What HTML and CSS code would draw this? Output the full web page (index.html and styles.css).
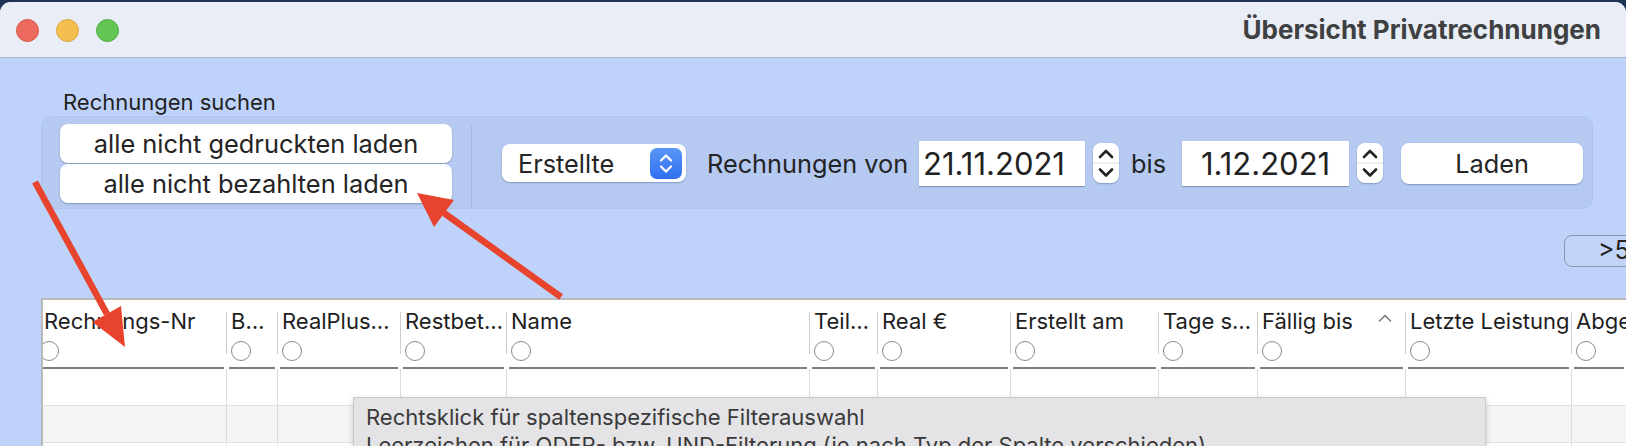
FILE: index.html
```html
<!DOCTYPE html>
<html lang="de">
<head>
<meta charset="utf-8">
<title>Übersicht Privatrechnungen</title>
<link rel="stylesheet" href="styles.css">
</head>
<body>
<div class="window">
  <div class="titlebar">
    <div class="lights">
      <span class="light red"></span>
      <span class="light yellow"></span>
      <span class="light green"></span>
    </div>
    <div class="title">Übersicht Privatrechnungen</div>
  </div>

  <div class="content">
    <div class="search-label">Rechnungen suchen</div>
    <div class="group">
      <div class="quick">
        <div class="qbtn">alle nicht gedruckten laden</div>
        <div class="qbtn">alle nicht bezahlten laden</div>
      </div>
      <div class="vsep"></div>
      <div class="controls">
        <div class="popup">
          <span class="popup-text">Erstellte</span>
          <svg class="popup-arrows" width="32" height="31" viewBox="0 0 32 31">
            <defs>
              <linearGradient id="pb" x1="0" y1="0" x2="0" y2="1">
                <stop offset="0" stop-color="#5a97f8"/>
                <stop offset="1" stop-color="#2f6fef"/>
              </linearGradient>
            </defs>
            <rect x="0" y="0" width="32" height="31" rx="7" fill="url(#pb)"/>
            <path d="M11 12.5 L16 7.5 L21 12.5" fill="none" stroke="#fff" stroke-width="2.2" stroke-linecap="round" stroke-linejoin="round"/>
            <path d="M11 18.5 L16 23.5 L21 18.5" fill="none" stroke="#fff" stroke-width="2.2" stroke-linecap="round" stroke-linejoin="round"/>
          </svg>
        </div>
        <span class="ctl-label von">Rechnungen von</span>
        <div class="datefield d1">21.11.2021</div>
        <svg class="stepper" width="26" height="40" viewBox="0 0 26 40">
          <path d="M7 14 L13 8 L19 14" fill="none" stroke="#222" stroke-width="2.6" stroke-linecap="round" stroke-linejoin="round"/>
          <path d="M7 26.5 L13 32.5 L19 26.5" fill="none" stroke="#222" stroke-width="2.6" stroke-linecap="round" stroke-linejoin="round"/>
        </svg>
        <span class="ctl-label bis">bis</span>
        <div class="datefield d2">1.12.2021</div>
        <svg class="stepper s2" width="26" height="40" viewBox="0 0 26 40">
          <path d="M7 14 L13 8 L19 14" fill="none" stroke="#222" stroke-width="2.6" stroke-linecap="round" stroke-linejoin="round"/>
          <path d="M7 26.5 L13 32.5 L19 26.5" fill="none" stroke="#222" stroke-width="2.6" stroke-linecap="round" stroke-linejoin="round"/>
        </svg>
        <div class="laden">Laden</div>
      </div>
    </div>

    <div class="pager">
      <div class="pbtn">&gt;5</div>
    </div>

    <div class="table">
      <div class="thead">
        <div class="hc first"><div class="ht">Rechnungs-Nr</div><span class="radio"></span><div class="hline"></div></div>
        <div class="hc"><div class="ht">B…</div><span class="radio"></span><div class="hline"></div></div>
        <div class="hc"><div class="ht">RealPlus…</div><span class="radio"></span><div class="hline"></div></div>
        <div class="hc"><div class="ht">Restbet…</div><span class="radio"></span><div class="hline"></div></div>
        <div class="hc"><div class="ht">Name</div><span class="radio"></span><div class="hline"></div></div>
        <div class="hc"><div class="ht">Teil…</div><span class="radio"></span><div class="hline"></div></div>
        <div class="hc"><div class="ht">Real €</div><span class="radio"></span><div class="hline"></div></div>
        <div class="hc"><div class="ht">Erstellt am</div><span class="radio"></span><div class="hline"></div></div>
        <div class="hc"><div class="ht">Tage s…</div><span class="radio"></span><div class="hline"></div></div>
        <div class="hc"><div class="ht sorted"><span>Fällig bis</span><svg class="sort" width="14" height="8" viewBox="0 0 14 8"><path d="M1.5 7 L7 1.5 L12.5 7" fill="none" stroke="#7a7a7a" stroke-width="1.6" stroke-linecap="round" stroke-linejoin="round"/></svg></div><span class="radio"></span><div class="hline"></div></div>
        <div class="hc"><div class="ht">Letzte Leistung</div><span class="radio"></span><div class="hline"></div></div>
        <div class="hc last"><div class="ht">Abgeschlossen</div><span class="radio"></span><div class="hline"></div></div>
      </div>
      <div class="trow">
        <div></div><div></div><div></div><div></div><div></div><div></div><div></div><div></div><div></div><div></div><div></div><div></div>
      </div>
      <div class="trow alt">
        <div></div><div></div><div></div><div></div><div></div><div></div><div></div><div></div><div></div><div></div><div></div><div></div>
      </div>
      <div class="trow">
        <div></div><div></div><div></div><div></div><div></div><div></div><div></div><div></div><div></div><div></div><div></div><div></div>
      </div>
    </div>
  </div>

  <div class="tooltip">
    <div>Rechtsklick für spaltenspezifische Filterauswahl</div>
    <div>Leerzeichen für ODER- bzw. UND-Filterung (je nach Typ der Spalte verschieden)</div>
  </div>

  <svg class="arrows" width="1626" height="446" viewBox="0 0 1626 446">
    <g fill="#e8432c" stroke="none">
      <path d="M35 182 L107 314" stroke="#e8432c" stroke-width="6.5" fill="none"/>
      <polygon points="125,347 92.5,322 121,306"/>
      <path d="M561 297 L444 213" stroke="#e8432c" stroke-width="6.5" fill="none"/>
      <polygon points="417,193 434,227 454,200"/>
    </g>
  </svg>
</div>
</body>
</html>
```
FILE: styles.css
```css
html, body {
  margin: 0;
  padding: 0;
}
body {
  width: 1626px;
  height: 446px;
  overflow: hidden;
  background: #1f3357;
  font-family: Inter, "Noto Sans", "Liberation Sans", sans-serif;
  color: #252525;
}

.window {
  position: relative;
  margin-top: 2px;
  width: 1626px;
  height: 444px;
  overflow: hidden;
  border-radius: 11px 11px 0 0;
  background: #bfd3fa;
}

/* Title bar */
.titlebar {
  height: 55px;
  border-bottom: 1px solid #a9b8d7;
  background: #e9edf5;
  display: flex;
  align-items: center;
  box-sizing: content-box;
}
.lights {
  display: flex;
  gap: 17px;
  padding-left: 16px;
  margin-top: 1px;
}
.light {
  width: 23px;
  height: 23px;
  border-radius: 50%;
  box-sizing: border-box;
}
.red { background: #ed6a5e; border: 1px solid #d8574b; }
.yellow { background: #f5bf4f; border: 1px solid #dba540; }
.green { background: #62c554; border: 1px solid #50ac43; }
.title {
  margin-left: auto;
  padding-right: 25px;
  font-size: 26px;
  font-weight: 700;
  color: #3f4042;
  letter-spacing: 0;
}

/* Content */
.content {
  padding-top: 31px;
}
.search-label {
  margin-left: 63px;
  height: 27px;
  line-height: 27px;
  font-size: 22px;
  color: #222;
}
.group {
  margin-left: 41px;
  width: 1552px;
  height: 93px;
  box-sizing: border-box;
  border: 1px solid #afc3eb;
  border-radius: 10px;
  background: #b5c9f1;
  display: flex;
}
.quick {
  display: flex;
  flex-direction: column;
  gap: 1px;
  padding: 7px 0 0 18px;
}
.qbtn {
  width: 392px;
  height: 39px;
  line-height: 39px;
  background: #fff;
  border-radius: 8px;
  box-shadow: 0 1px 1.5px rgba(40, 60, 100, 0.35);
  font-size: 25.4px;
  text-align: center;
  color: #242424;
}
.vsep {
  width: 1px;
  background: #a2b6dd;
  margin: 9px 0 0 19px;
}
.controls {
  display: flex;
  align-items: center;
  margin-left: 30px;
  padding-top: 1px;
}
.popup {
  width: 184px;
  height: 38px;
  box-sizing: border-box;
  background: #fff;
  border-radius: 8px;
  box-shadow: 0 1px 1.5px rgba(40, 60, 100, 0.35);
  display: flex;
  align-items: center;
  padding-left: 16px;
  padding-right: 4px;
}
.popup-text {
  font-size: 25.3px;
  flex: 1;
}
.popup-arrows {
  display: block;
}
.ctl-label {
  font-size: 25.3px;
  color: #242424;
}
.von { margin-left: 21px; }
.bis { margin-left: 12px; }
.datefield {
  height: 45px;
  line-height: 45px;
  background: #fff;
  box-shadow: 0 1px 1px rgba(40, 60, 100, 0.35);
  font-size: 31px;
  color: #222;
  box-sizing: border-box;
}
.d1 {
  width: 166px;
  margin-left: 11px;
  padding-left: 4px;
}
.d2 {
  width: 167px;
  margin-left: 16px;
  text-align: center;
}
.stepper {
  display: block;
  margin-left: 8px;
  background: linear-gradient(#fff 0, #fff 48%, #d9d9d9 50%, #fff 53%, #fff 100%);
  border-radius: 8px;
  box-shadow: 0 1px 1.5px rgba(40, 60, 100, 0.35);
}
.laden {
  width: 182px;
  height: 41px;
  line-height: 41px;
  margin-left: 18px;
  background: #fff;
  border-radius: 8px;
  box-shadow: 0 1px 1.5px rgba(40, 60, 100, 0.35);
  font-size: 25.3px;
  text-align: center;
}

/* pager */
.pager {
  margin-top: 26px;
  height: 32px;
  display: flex;
}
.pbtn {
  margin-left: 1564px;
  width: 100px;
  flex: none;
  height: 32px;
  box-sizing: border-box;
  border: 1.5px solid #8b97ad;
  border-radius: 8px;
  background: #c2d5f9;
  font-size: 25px;
  line-height: 29px;
  padding-left: 33px;
  color: #222;
}

/* table */
.table {
  margin-top: 31px;
  margin-left: 41px;
  width: 1585px;
  border-top: 2px solid #bababa;
  border-left: 2px solid #bababa;
  background: #fff;
  box-sizing: border-box;
}
.thead, .trow {
  display: grid;
  grid-template-columns: 183px 51px 123px 106px 303px 68px 133px 148px 99px 148px 166px 1fr;
}
.hc {
  padding-top: 8px;
  overflow: hidden;
  white-space: nowrap;
  background: linear-gradient(#cfcfcf, #cfcfcf) no-repeat 0 12px / 1px 42px;
}
.hc.first {
  background: none;
}
.ht {
  height: 27px;
  line-height: 27px;
  font-size: 22px;
  color: #1e1e1e;
  padding-left: 5px;
  overflow: hidden;
}
.hc.first .ht,
.hc.first .radio {
  margin-left: -4px;
}
.ht.sorted {
  display: flex;
  align-items: center;
  justify-content: space-between;
  padding-right: 13px;
}
.sort {
  display: block;
  margin-top: -7px;
}
.radio {
  display: block;
  width: 20px;
  height: 20px;
  box-sizing: border-box;
  border: 1px solid #8a8a8a;
  border-radius: 50%;
  background: #fff;
  margin: 6px 0 0 5px;
}
.hline {
  height: 2px;
  background: #7e7e7e;
  margin: 6px 2px 0 3px;
}
.hc.first .hline {
  margin-left: -1px;
}
.trow {
  height: 37px;
  box-sizing: border-box;
  border-bottom: 1px solid #e1e1e1;
}
.trow > div {
  border-left: 1px solid #dcdcdc;
}
.trow > div:first-child {
  border-left: none;
}
.trow.alt {
  background: #f4f4f5;
}

/* tooltip */
.tooltip {
  position: absolute;
  left: 353px;
  top: 395px;
  width: 1133px;
  height: 80px;
  box-sizing: border-box;
  background: #e4e4e6;
  border: 1px solid #cacacd;
  box-shadow: 0 2px 6px rgba(0, 0, 0, 0.18);
  padding: 5px 12px;
  font-size: 22px;
  line-height: 28px;
  color: #3a3a3a;
  white-space: nowrap;
}

.arrows {
  position: absolute;
  left: 0;
  top: -2px;
  pointer-events: none;
}
```
